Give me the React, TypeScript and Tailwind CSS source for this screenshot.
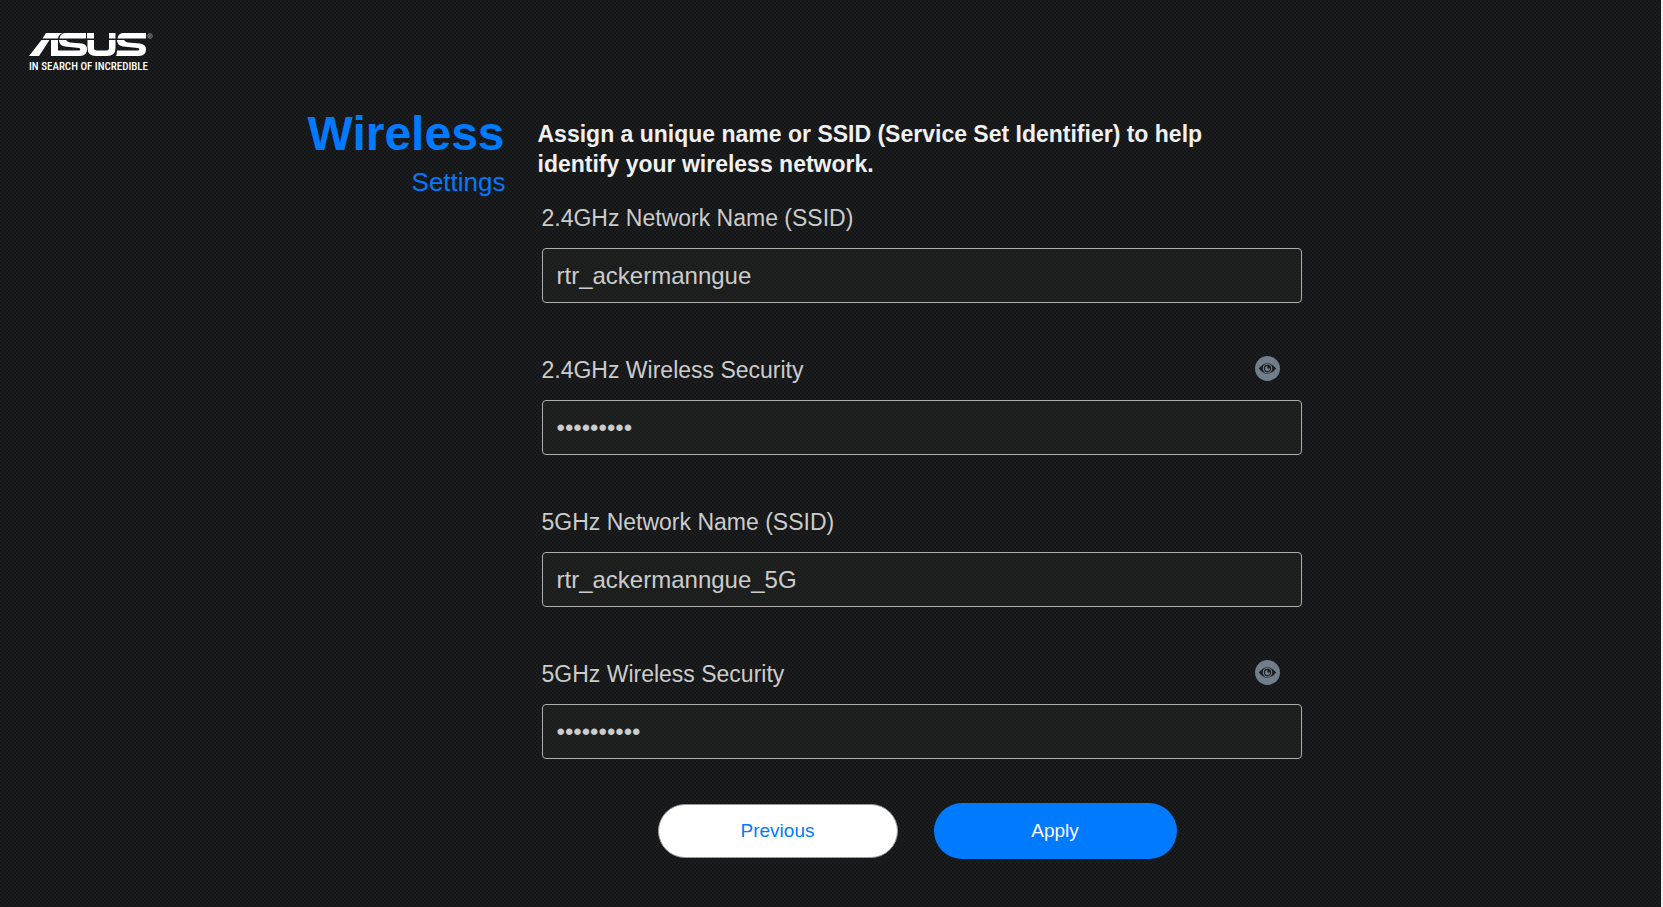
import { useState } from "react";

function AsusLogo() {
  return (
    <svg viewBox="0 0 126 40" className="h-10 w-[126px]" role="img" aria-label="ASUS In Search of Incredible">
      <g fill="#ffffff">
        <path d="M17 1H34Q29.500 2 29 6.500H13.500Z" />
        <path d="M12.500 8H20.500L10 24H0Z" />
        <path d="M22 8H29V24H22Z" />
        <path d="M37 1H57V6.500H30.500Q31 1 37 1Z" />
        <path d="M30 8H37Q38 10 41 10.400L53 11.600Q58 12.400 58 17.500Q58 24 51 24H22V18.500H50Q51.300 18.500 51.300 17.300Q51.300 16.200 50 16L36 14.600Q30 13.500 30 8Z" />
        <path d="M58 1H65V6.500H58Z" />
        <path d="M58.500 8H65V16Q65 18.500 68 18.500H77Q80 18.500 80 16V8H86.500V16Q86.500 24 78 24H67Q58.500 24 58.500 16Z" />
        <path d="M80 1H86.500V6.500H80Z" />
        <path d="M95 1H117V6.500H88.500Q89 1 95 1Z" />
        <path d="M88 8H95Q96 10 99 10.400L111 11.600Q117 12.400 117 17.500Q117 24 110 24H87Q88 22 88 18.500H109Q110.300 18.500 110.300 17.300Q110.300 16.200 109 16L94 14.600Q88 13.500 88 8Z" />
      </g>
      <circle cx="121" cy="4" r="2.300" fill="none" stroke="#aaaaaa" strokeWidth="0.7" />
      <path d="M120.300 5.200V3H121.500V4H120.300M121 4L121.700 5.200" fill="none" stroke="#aaaaaa" strokeWidth="0.5" />
      <text x="0" y="38" fill="#ffffff" fontFamily="'Roboto Condensed', 'Roboto', sans-serif" fontSize="11" fontWeight="500">
        IN SEARCH OF INCREDIBLE
      </text>
    </svg>
  );
}

function EyeIcon() {
  return (
    <svg viewBox="0 0 26 26" className="size-[25px]" aria-hidden="true">
      <circle cx="13" cy="13" r="13" fill="#707d8a" />
      <path d="M4 13Q13 2 22 13Q13 24 4 13Z" fill="#191b1c" />
      <circle cx="13" cy="13" r="4.400" fill="none" stroke="#707d8a" strokeWidth="1.200" />
      <path d="M13 10.300A2.700 2.700 0 1 0 15.700 13H13Z" fill="#707d8a" />
    </svg>
  );
}

type FieldProps = { id: string; label: string; value: string; secret?: boolean };

function Field({ id, label, value, secret = false }: FieldProps) {
  const [text, setText] = useState(value);
  const [visible, setVisible] = useState(false);
  return (
    <div className="flex flex-col gap-4">
      <div className="flex h-7 items-start justify-between pr-[22px]">
        <label htmlFor={id} className="text-[23px] leading-7 text-[#cccccc]">{label}</label>
        {secret && (
          <button type="button" aria-label="Show password" aria-pressed={visible} onClick={() => setVisible(!visible)}>
            <EyeIcon />
          </button>
        )}
      </div>
      <input
        id={id}
        type={secret && !visible ? "password" : "text"}
        value={text}
        onChange={(e) => setText(e.target.value)}
        className="h-[55px] w-full rounded-[4px] border border-[#adadad] bg-[#242524]/50 px-[14px] text-2xl text-[#cccccc] outline-none"
      />
    </div>
  );
}

export default function App() {
  return (
    <div className="flex min-h-screen flex-col border-r-2 border-[#f0f0f0] bg-[repeating-conic-gradient(#131516_0_25%,#1b1d1e_0_50%)] bg-[length:4px_4px] font-['Liberation_Sans',Arial,sans-serif]">
      <header className="px-[29px] pt-8">
        <AsusLogo />
      </header>
      <main className="mx-auto mt-9 flex w-full max-w-[1046px] gap-8 pr-[52px] pb-12">
        <div className="w-[198px] shrink-0 text-right text-[#007aff]">
          <h1 className="pr-px text-5xl leading-[52px] font-bold">Wireless</h1>
          <p className="mt-1.5 text-[26px] leading-8">Settings</p>
        </div>
        <form className="flex-1" onSubmit={(e) => e.preventDefault()}>
          <h2 className="mt-[11px] max-w-[680px] text-[23px] leading-[30px] font-bold text-[#f0f0f0]">
            Assign a unique name or SSID (Service Set Identifier) to help identify your wireless network.
          </h2>
          <div className="mt-[25px] flex flex-col gap-[53px] pl-1">
            <Field id="ssid24" label="2.4GHz Network Name (SSID)" value="rtr_ackermanngue" />
            <Field id="key24" label="2.4GHz Wireless Security" value="password1" secret />
            <Field id="ssid5" label="5GHz Network Name (SSID)" value="rtr_ackermanngue_5G" />
            <Field id="key5" label="5GHz Wireless Security" value="password12" secret />
          </div>
          <div className="mt-11 flex items-center gap-9 pl-[120px]">
            <button type="button" className="h-[54px] w-60 rounded-full border border-[#999999] bg-white text-[19px] text-[#007aff]">Previous</button>
            <button type="submit" className="h-14 w-[243px] rounded-full bg-[#007aff] text-[19px] text-white">Apply</button>
          </div>
        </form>
      </main>
    </div>
  );
}
